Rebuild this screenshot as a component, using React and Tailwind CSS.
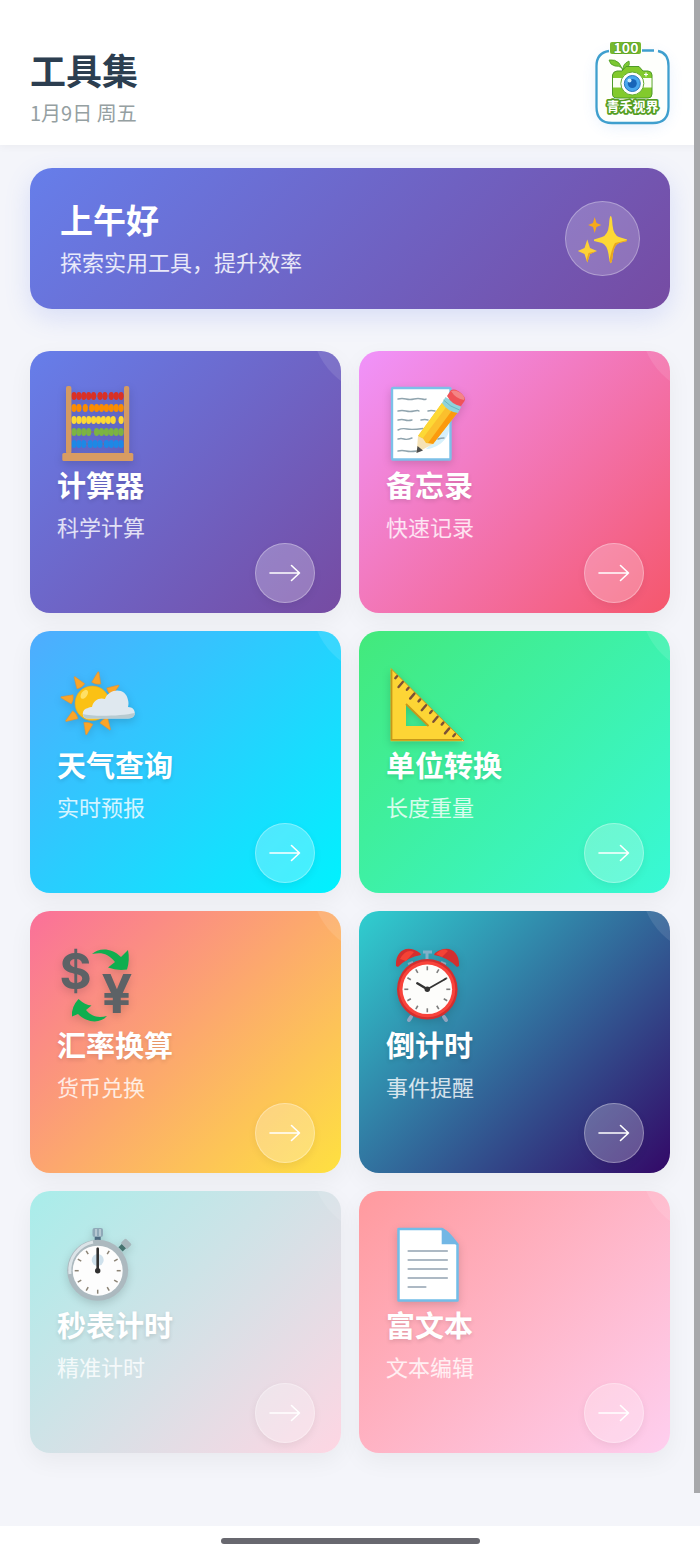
const TICKS = [0, 30, 60, 90, 120, 150, 180, 210, 240, 270, 300, 330];

const BEAD_ROWS = [
    { y: 13, color: "#d93025", gaps: [5, 7] },
    { y: 25, color: "#fb8c00", gaps: [2, 3] },
    { y: 37, color: "#fdd835", gaps: [9] },
    { y: 49, color: "#7cb342", gaps: [4] },
    { y: 61, color: "#1e88e5", gaps: [3, 6] },
];

function AbacusIcon() {
    return (
        <>
            {BEAD_ROWS.map((row) => (
                <g key={row.y}>
                    <path d={`M14 ${row.y}H68`} stroke="#8d6e63" strokeWidth="1" />
                    {[0, 1, 2, 3, 4, 5, 6, 7, 8, 9].map((i) => {
                        const shift = row.gaps.filter((g) => i >= g).length * (3 / row.gaps.length);
                        return <ellipse key={i} cx={17 + i * 4.9 + shift} cy={row.y} rx="2.6" ry="4" fill={row.color} />;
                    })}
                </g>
            ))}
            <rect x="9" y="3" width="5.4" height="68" rx="2" fill="#d49a62" />
            <rect x="67" y="3" width="5.2" height="68" rx="2" fill="#d49a62" />
            <rect x="5.3" y="70" width="71" height="8" rx="1.5" fill="#d99c62" />
        </>
    );
}

function MemoIcon() {
    return (
        <>
            <rect x="6" y="5" width="58.5" height="71.5" rx="1" fill="#fff" stroke="#7cc0e8" strokeWidth="2.4" />
            <path d="M40 66c9 0 22-8 23-19l0-8-18 22z" fill="#d6f0fb" />
            <g fill="none" stroke="#90a4ae" strokeWidth="1.4" strokeLinecap="round">
                <path d="M12 16q4-1 8 0t8 0 8 0 4 0" />
                <path d="M12 28q4-1 8 0t8 0 5 0M42 28q3-1 7 0" />
                <path d="M12 37q4-1 7 0t7 0M35 37q4-1 7 0" />
                <path d="M12 47q4-2 9-1t16-.5" />
                <path d="M12 56q3-1 6 0t8-1M52 56q3-1 6-1" />
                <path d="M12 68q4-1 8 0t11 0" />
            </g>
            <path d="M56 20 72 29 47 61 39 61 32 53z" fill="#fbc02d" />
            <path d="M56 20 61 23 37 55 32 53z" fill="#fdd835" />
            <path d="M67 26 72 29 47 61 42 60z" fill="#fb9a0e" />
            <path d="M32 53 37 55.5 40 60 47 61 34 68 30.7 69.5z" fill="#f6e2b5" />
            <path d="M31.5 63 37 67.5 30.5 70z" fill="#4e4e4e" />
            <path d="M59.5 14 75 24 72 30Q62 29 56 20z" fill="#8fd3dc" />
            <path d="M57.5 17Q64 24 73.5 27" fill="none" stroke="#6ab7c0" />
            <path d="M61 13 65 7Q70 5 76 11 80 15 78.5 18L75 23Q66 22 61 13z" fill="#ef5358" />
            <path d="M65 8Q70 6 76 11 79 14 78 17 70 16 65 8z" fill="#f48585" />
        </>
    );
}

function WeatherIcon() {
    return (
        <>
            <g transform="translate(35.3 40.3)">
                {[11, 56, 146, 191, 236, 281, 326].map((a) => (
                    <path key={a} transform={`rotate(${a})`} d="M-4.7-20.5Q0-18.5 4.7-20.5L.5-32H-.5z" fill="#faa528" stroke="#d98d3a" strokeWidth=".5" />
                ))}
                <circle r="17.3" fill="#fbc114" stroke="#e89f2e" strokeWidth=".6" />
                <ellipse cx="-8" cy="-9" rx="3" ry="5" transform="rotate(35 -8 -9)" fill="#ffe066" />
            </g>
            <path d="M31 55.5c-7 0-7-9.5 0-10.5 1-1 3-1 4-1 1-7 8-10 13-8 4-11 21-12 23 1 .8 3 .5 5 0 7 9 0 9 11.5 0 11.5z" fill="#dfe8ef" />
            <path d="M26 51c10 3 38 2 52-1 0 4-3 5.500-7 5.500H31c-3 0-5-1.500-5-4.500z" fill="#b8cbd1" />
        </>
    );
}

function TriangleIcon() {
    return (
        <>
            <path d="M4.7 5.3V78.3H78z M20 41 42.5 63H20z" fill="#fdd535" fillRule="evenodd" />
            <path d="M4.7 5.3 78 78" stroke="#c79a1c" strokeWidth="1" />
            <path d="M5.5 6.5V76.8H76" fill="none" stroke="#c6981a" strokeWidth="1.8" />
            <path d="M20 41 42.5 63" stroke="#c6981a" strokeWidth="1.8" />
            {[0, 1, 2, 3, 4, 5, 6, 7, 8, 9, 10].map((i) => {
                const len = i % 2 ? 5 : 2;
                return (
                    <path
                        key={i}
                        d={`M${11 + i * 5.8} ${13.2 + i * 5.8}l${-len * 0.85} ${len}`}
                        stroke="#7b5136"
                        strokeWidth="2.4"
                        strokeLinecap="round"
                    />
                );
            })}
        </>
    );
}

function CurrencyIcon() {
    return (
        <>
            <g className="font-[Inter,sans-serif] font-bold" fill="#5d6266" textAnchor="middle">
                <text x="18.5" y="46" fontSize="49">$</text>
                <text x="60" y="70" fontSize="54">¥</text>
            </g>
            <g fill="#0fae4f">
                <path d="M35 11C41 5 54 4 64 14L71 7Q73 17 70 26.5 60 28 51 24.5L58 19C51 10 44 9 35 11z" />
                <path d="M50 73C43 81 30 80 21 71L15 73.5Q14 64 21.5 56 28 62 34.5 62.5L29 67C35 74 41 75 50 73z" />
            </g>
        </>
    );
}

function AlarmIcon() {
    return (
        <>
            <path d="M23 77l2-3M60 77l-2-3" stroke="#90a4c0" strokeWidth="4" strokeLinecap="round" />
            <path d="M41 10v7M37 9h9" stroke="#82b1c9" strokeWidth="3" />
            <path d="M10 23C9 9 20 0 34 10L35 12Q22 14 12 24z" fill="#d32f2f" />
            <path d="M14 16Q20 5 28 9L20 18z" fill="#f44336" />
            <path d="M73 23C74 9 63 0 49 10L48 12Q61 14 71 24z" fill="#d32f2f" />
            <path d="M50 11Q57 4 62 8L56 14z" fill="#f44336" />
            <path d="M22 21l5-2M60 21l-5-2" stroke="#90a4b8" strokeWidth="2" />
            <circle cx="41.3" cy="46.3" r="30.3" fill="#d32f2f" />
            <circle cx="41.3" cy="46.3" r="28" fill="#f8433b" />
            <circle cx="41.3" cy="46.3" r="24.8" fill="#fdfdfb" />
            <g transform="translate(41.3 46.3)">
                {TICKS.map((a) => (
                    <path key={a} transform={`rotate(${a})`} d="M0-23V-19" stroke="#7d7d7d" strokeWidth="1.6" />
                ))}
                <path d="M0 0 18.5-10.5" stroke="#333" strokeWidth="1.8" strokeLinecap="round" />
                <path d="M0 0-10-6" stroke="#333" strokeWidth="2.5" strokeLinecap="round" />
                <circle r="2.7" fill="#333" />
            </g>
        </>
    );
}

function StopwatchIcon() {
    return (
        <>
            <path d="M40.7 14v5" stroke="#4d6a80" strokeWidth="6" />
            <rect x="35.5" y="5" width="10.5" height="9" rx="2" fill="#8fa9b8" />
            <path d="M39 6v7M43 6v7" stroke="#c3d2da" strokeWidth="1.5" />
            <g transform="rotate(45 65 25)">
                <rect x="62" y="22" width="6" height="5" fill="#46736f" />
                <rect x="60.5" y="15.5" width="9" height="7" rx="1.5" fill="#a7b7bc" />
            </g>
            <circle cx="40.7" cy="47.3" r="30.5" fill="#acb9bf" />
            <path d="M13 51A29 29 0 0 1 36 19" fill="none" stroke="#dce4e8" strokeWidth="3" />
            <circle cx="40.7" cy="47.7" r="25" fill="#fdfdfd" />
            <circle cx="40.7" cy="37" r="6" fill="#cfe1ec" />
            <g transform="translate(40.7 47.7)">
                {TICKS.map((a) => (
                    <path key={a} transform={`rotate(${a})`} d="M0-23V-19" stroke="#8b8375" strokeWidth="1.5" />
                ))}
                <path d="M0 0V-22" stroke="#303030" strokeWidth="2.6" strokeLinecap="round" />
                <circle r="2.7" fill="#303030" />
            </g>
        </>
    );
}

function DocumentIcon() {
    return (
        <>
            <path d="M12.5 6H56L71.5 21.5V77.5H12.5z" fill="#fff" stroke="#72bde8" strokeWidth="2.5" strokeLinejoin="round" />
            <path d="M55.7 5Q62 6 72.5 21.3H55.7z" fill="#72b7e5" />
            <path d="M22.5 28H61M22.5 37H61M22.5 46H61M22.5 55H61M22.5 64H39.5" stroke="#adb9c4" strokeWidth="2.2" strokeLinecap="round" />
        </>
    );
}

const TOOLS = [
    { name: "计算器", desc: "科学计算", Icon: AbacusIcon, bg: "from-[#667eea] to-[#764ba2]" },
    { name: "备忘录", desc: "快速记录", Icon: MemoIcon, bg: "from-[#f093fb] to-[#f5576c]" },
    { name: "天气查询", desc: "实时预报", Icon: WeatherIcon, bg: "from-[#4facfe] to-[#00f2fe]" },
    { name: "单位转换", desc: "长度重量", Icon: TriangleIcon, bg: "from-[#43e97b] to-[#38f9d7]" },
    { name: "汇率换算", desc: "货币兑换", Icon: CurrencyIcon, bg: "from-[#fa709a] to-[#fee140]" },
    { name: "倒计时", desc: "事件提醒", Icon: AlarmIcon, bg: "from-[#30cfd0] to-[#330867]" },
    { name: "秒表计时", desc: "精准计时", Icon: StopwatchIcon, bg: "from-[#a8edea] to-[#fed6e3]" },
    { name: "富文本", desc: "文本编辑", Icon: DocumentIcon, bg: "from-[#ff9a9e] to-[#fecfef]" },
];

function ToolCard({ tool }) {
    const { name, desc, Icon, bg } = tool;
    return (
        <a
            href="#"
            className={`relative flex flex-col overflow-hidden rounded-[20px] bg-linear-[135deg] pt-8 pr-[26px] pb-[10px] pl-[27px] text-white shadow-[0_8px_24px_rgba(0,0,0,0.05)] ${bg}`}
        >
            <span className="absolute -top-[105px] -right-[120px] size-[150px] rounded-full bg-white/10" />
            <svg viewBox="0 0 82 82" className="size-[82px] overflow-visible drop-shadow-[0_3px_4px_rgba(0,0,0,0.15)]" aria-hidden="true">
                <Icon />
            </svg>
            <h2 className="text-[29px] leading-[38px] font-bold text-shadow-[0_2px_4px_rgba(0,0,0,0.12)]">{name}</h2>
            <p className="mt-2 text-[22px] leading-[30px] text-white/80">{desc}</p>
            <span className="mt-[2px] flex size-[60px] items-center justify-center self-end rounded-full border border-white/30 bg-white/25 shadow-[0_3px_8px_rgba(0,0,0,0.06)]">
                <svg width="32" height="18" viewBox="0 0 32 18" fill="none" stroke="#fff" strokeWidth="1.6" strokeLinecap="round" strokeLinejoin="round" aria-hidden="true">
                    <path d="M1 9H30.5M22.5 1.5 30.5 9 22.5 16.5" />
                </svg>
            </span>
        </a>
    );
}

function Logo() {
    return (
        <svg viewBox="0 0 75 75" className="size-[75px] overflow-visible" role="img" aria-label="青禾视界">
            <rect x="1.5" y="1" width="72" height="73" rx="16" fill="#fefffc" />
            <path
                d="M47 1.5H59M63 2Q73.500 4 73.500 17V58Q73.500 74 58 74H17Q1.500 74 1.500 58V17Q1.500 4 14 2"
                fill="none"
                stroke="#3f9fce"
                strokeWidth="2.3"
            />
            <rect x="15" y="-7" width="31" height="12" rx="2" fill="#76b82e" />
            <path d="M28 22Q28 17 20 17 15 16 14 11 20 10 24 14 26 17 28 22 27 15 34 12 36 18 28 22" fill="#7cc832" stroke="#4d9a24" strokeWidth=".8" />
            <path d="M17.500 26Q18 22.500 22 22H27L31 17.500H44L48 22H53Q57 22.500 57 26V45Q57 49 53 49H22Q17.500 49 17.500 45z" fill="#82ca2c" stroke="#4e9a28" />
            <path d="M18 29H56.5V38.5H18z" fill="#fbfff4" />
            <path d="M51 23.500v4M49 25.500h4" stroke="#fff" strokeWidth="1.2" />
            <circle cx="37.300" cy="34.500" r="11.500" fill="#fff" stroke="#62aa2d" />
            <circle cx="37.300" cy="34.500" r="8" fill="#49a8ee" stroke="#2c78bd" />
            <circle cx="37.300" cy="34.500" r="4.500" fill="#1765b8" />
            <circle cx="34.500" cy="31.500" r="2" fill="#c9ecff" />
            <g fill="#fff" stroke="#559e22" strokeLinejoin="round" textAnchor="middle" paintOrder="stroke" className="font-bold">
                <text x="31" y="4" fontSize="14" strokeWidth="1.5">100</text>
                <text x="37.5" y="62" fontSize="13" strokeWidth="3.5">青禾视界</text>
            </g>
        </svg>
    );
}

export default function App() {
    return (
        <div className="relative flex min-h-screen flex-col bg-[#f4f5fa] font-['Noto_Sans_CJK_SC',sans-serif]">
            <header className="flex items-center justify-between bg-white px-[30px] pt-[45px] pb-[17px] shadow-[0_2px_8px_rgba(0,0,0,0.04)]">
                <div>
                    <h1 className="text-4xl leading-[48px] font-bold text-[#2c3e50]">工具集</h1>
                    <p className="mt-[5px] text-xl leading-[30px] text-[#95a0a2]">1月9日 周五</p>
                </div>
                <button type="button" className="rounded-[20px] shadow-[0_4px_14px_rgba(80,150,240,0.12)]">
                    <Logo />
                </button>
            </header>

            <main className="grow px-[30px] pt-[23px] pb-[73px]">
                <section className="flex items-center justify-between rounded-[22px] bg-linear-[135deg] from-[#667eea] to-[#764ba2] p-[30px] text-white shadow-[0_8px_26px_rgba(102,126,234,0.2)]">
                    <div>
                        <h2 className="text-[33px] leading-[42px] font-bold">上午好</h2>
                        <p className="mt-[5px] pb-[2px] text-[22px] leading-8 text-white/85">探索实用工具，提升效率</p>
                    </div>
                    <div className="size-[75px] rounded-full border border-white/30 bg-white/20">
                        <svg viewBox="1 1 73 73" aria-hidden="true">
                            <path d="M45.7 15Q47 15 47.5 24 48.5 34 54 36L62 38.5V40L54 42Q49 44 48 53 47 62 45.7 62.3 44.5 62 43.5 53 42 44 37 42L29 40V38.5L37 36Q43 34 44 24 44.5 15 45.7 15z" fill="#fdd835" />
                            <path d="M62 40 54 42Q49 44 48 53 47 62 45.7 62.3 45 62 44.5 59 47 47 50 42 55 41 62 39z" fill="#e9a51f" />
                            <path d="M29.7 16 31.5 22 36.3 24 31.5 26 29.7 32 28 26 23.2 24 28 22z" fill="#f6a91b" />
                            <path d="M22.3 38.5 25 47 32 50 25 53 22.3 61.5 19.5 53 12.8 50 19.5 47z" fill="#fdd135" />
                            <path d="M32 50 25 53 22.3 61.5 21.5 59 23.5 52z" fill="#eba71f" />
                        </svg>
                    </div>
                </section>

                <section className="mt-[42px] grid grid-cols-2 gap-[18px]">
                    {TOOLS.map((tool) => (
                        <ToolCard key={tool.name} tool={tool} />
                    ))}
                </section>
            </main>

            <footer className="flex h-[29px] items-center justify-center bg-white">
                <div className="h-[6px] w-[37%] rounded-full bg-[#68686f]" />
            </footer>

            {/* scrollbar thumb */}
            <div className="absolute top-0 right-0 h-[96%] w-[6px] bg-[#a7a8ab]" />
        </div>
    );
}
